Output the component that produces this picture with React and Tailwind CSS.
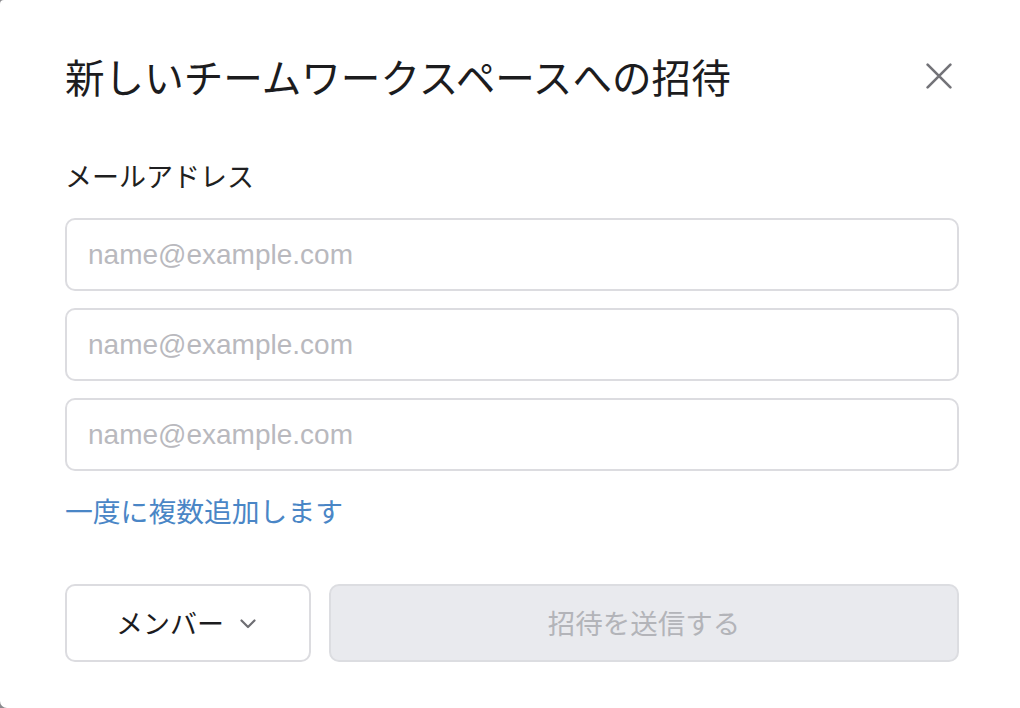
const FIELDS = [0, 1, 2]

const jp = { fontFamily: '"Noto Sans CJK JP", "Liberation Sans", sans-serif' }

export default function App() {
  return (
    <div className="h-[708px] w-[1020px] overflow-hidden bg-[#8a8a8e]">
      <div
        className="flex h-full w-full flex-col rounded-tl-[4px] rounded-bl-[7px] bg-white pl-[65px] pr-[61px] pt-[52px]"
        style={jp}
      >
        <div className="flex items-center justify-between">
          <h1 className="text-[39.6px] leading-[48px] font-normal text-[#1c1c1e]">
            新しいチームワークスペースへの招待
          </h1>
          <button className="mr-[6px] flex h-[28px] w-[28px] items-center justify-center">
            <svg width="26" height="26" viewBox="0 0 24 24" fill="none">
              <path d="M1.5 1.5 L22.5 22.5 M22.5 1.5 L1.5 22.5" stroke="#737378" strokeWidth="2.4" strokeLinecap="round" />
            </svg>
          </button>
        </div>

        <label className="mt-[58px] text-[27px] leading-[36px] text-[#1f1f21]">メールアドレス</label>

        <div className="mt-[24px] flex flex-col gap-[17px]">
          {FIELDS.map((i) => (
            <input
              key={i}
              type="email"
              placeholder="name@example.com"
              className="h-[73px] w-full rounded-[10px] border-2 border-[#dcdce0] px-[21px] text-[28px] text-[#1c1c1e] outline-none placeholder:text-[#b9b9be]"
              style={{ fontFamily: '"Liberation Sans", Arial, sans-serif' }}
            />
          ))}
        </div>

        <a className="mt-[21px] text-[27.8px] leading-[36px] text-[#4a86c6]">一度に複数追加します</a>

        <div className="mt-[56px] flex gap-[18px]">
          <button className="flex h-[78px] w-[246px] items-center justify-center gap-[16px] rounded-[10px] border-2 border-[#dcdce0] bg-white pr-[4px] text-[27px] text-[#1c1c1e]">
            <span>メンバー</span>
            <svg width="16" height="10" viewBox="0 0 16 10" fill="none" className="mt-[2px]">
              <path d="M1.5 1.5 L8 8 L14.5 1.5" stroke="#6e6e73" strokeWidth="2.2" strokeLinecap="round" strokeLinejoin="round" />
            </svg>
          </button>
          <button className="flex h-[78px] flex-1 items-center justify-center rounded-[10px] border-2 border-[#dcdde1] bg-[#e9eaee] text-[27.5px] text-[#b3b4b9]">
            招待を送信する
          </button>
        </div>
      </div>
    </div>
  )
}
